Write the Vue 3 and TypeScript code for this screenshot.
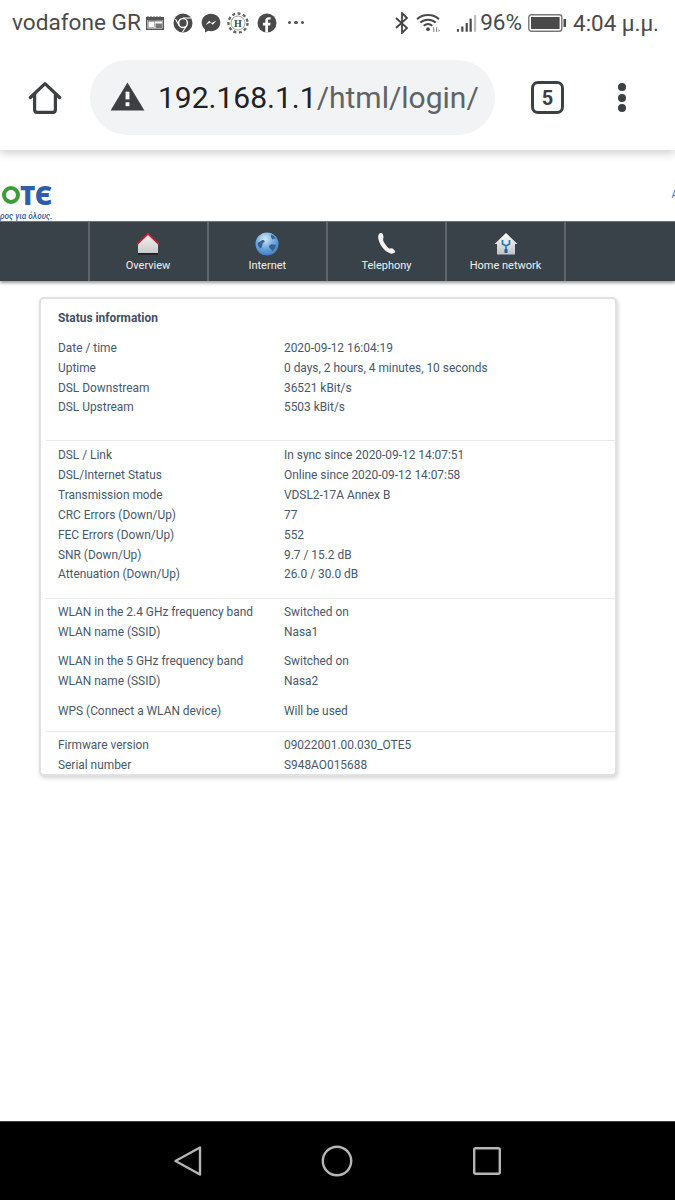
<script setup lang="ts">
interface Row { label: string; value: string }
interface Group { cls: string; rows: Row[] }

const groups: Group[] = [
  { cls: 'g1', rows: [
    { label: 'Date / time', value: '2020-09-12 16:04:19' },
    { label: 'Uptime', value: '0 days, 2 hours, 4 minutes, 10 seconds' },
    { label: 'DSL Downstream', value: '36521 kBit/s' },
    { label: 'DSL Upstream', value: '5503 kBit/s' },
  ] },
  { cls: 'g2', rows: [
    { label: 'DSL / Link', value: 'In sync since 2020-09-12 14:07:51' },
    { label: 'DSL/Internet Status', value: 'Online since 2020-09-12 14:07:58' },
    { label: 'Transmission mode', value: 'VDSL2-17A Annex B' },
    { label: 'CRC Errors (Down/Up)', value: '77' },
    { label: 'FEC Errors (Down/Up)', value: '552' },
    { label: 'SNR (Down/Up)', value: '9.7 / 15.2 dB' },
    { label: 'Attenuation (Down/Up)', value: '26.0 / 30.0 dB' },
  ] },
]
const wlan: Row[][] = [
  [
    { label: 'WLAN in the 2.4 GHz frequency band', value: 'Switched on' },
    { label: 'WLAN name (SSID)', value: 'Nasa1' },
  ],
  [
    { label: 'WLAN in the 5 GHz frequency band', value: 'Switched on' },
    { label: 'WLAN name (SSID)', value: 'Nasa2' },
  ],
  [{ label: 'WPS (Connect a WLAN device)', value: 'Will be used' }],
]
const fw: Row[] = [
  { label: 'Firmware version', value: '09022001.00.030_OTE5' },
  { label: 'Serial number', value: 'S948AO015688' },
]
</script>

<template>
  <div class="screen">
    <div class="status">
      <span class="carrier">vodafone GR</span>
      <svg class="ic" width="20" height="16" viewBox="0 0 20 16"><path d="M1 2h1.5V1h1v1h2V1h1v1h2V1h1v1h2V1h1v1h2V1h1v1H19v13H1z" fill="#555"/><rect x="2.5" y="5" width="15" height="8.5" fill="#fff"/><rect x="3.5" y="6" width="6" height="6.5" fill="#fff" stroke="#888" stroke-width=".6"/><rect x="10.500" y="8.500" width="6.500" height="4.500" fill="#777"/><path d="M3 5.800h14" stroke="#666" stroke-width="1.200"/></svg>
      <svg class="ic i-chrome" width="20" height="20" viewBox="0 0 20 20"><circle cx="10" cy="10" r="9.500" fill="#4a4a4a"/><circle cx="10" cy="10" r="4.400" fill="#4a4a4a" stroke="#fff" stroke-width="1.500"/><path d="M10 5h8M6 12.500 2.500 6M13.500 13 9.500 19" stroke="#fff" stroke-width="1.100"/></svg>
      <svg class="ic i-msg" width="20" height="20" viewBox="0 0 20 20"><path d="M10 .8c5.200 0 9.300 3.800 9.300 8.700s-4.100 8.700-9.300 8.700c-1 0-1.900-.1-2.700-.4L4 19.500v-3.200C1.900 14.700.7 12.300.7 9.500.7 4.600 4.800.8 10 .8z" fill="#4a4a4a"/><path d="m4.600 12.100 3.500-4.300 2.700 2.200 4.600-2.600-3.500 4.300-2.700-2.200z" fill="#fff"/></svg>
      <svg class="ic i-h" width="22" height="22" viewBox="0 0 22 22"><circle cx="11" cy="11" r="9.500" fill="#fff" stroke="#666" stroke-width="2.400" stroke-dasharray="3 2.500"/><circle cx="11" cy="11" r="7" fill="#fff" stroke="#888" stroke-width=".8"/><text x="11" y="14.600" text-anchor="middle" class="h-text">H</text></svg>
      <svg class="ic i-fb" width="20" height="20" viewBox="0 0 20 20"><circle cx="10" cy="10" r="9.500" fill="#4a4a4a"/><path d="M8.300 19.500v-7H6V9.800h2.300V7.700c0-2.300 1.400-3.500 3.400-3.500.9 0 1.700.1 1.900.1v2.300h-1.300c-1.100 0-1.300.5-1.300 1.300v1.900h2.600l-.4 2.700h-2.200v7z" fill="#fff"/></svg>
      <span class="dots">
        <i></i><i></i><i></i>
      </span>
      <span class="spacer"></span>
      <svg class="ic i-bt" width="16" height="22" viewBox="0 0 16 22"><path d="m2 6 11 10-5 5V1l5 5L2 16" fill="none" stroke="#444" stroke-width="1.800"/></svg>
      <svg class="ic i-wifi" width="25" height="21" viewBox="0 0 26 22"><path d="M1 7.500C7 1.800 18 1.800 24 7.500M4.500 11c4.500-4 11.500-4 16 0M8 14.500c2.800-2.300 6.200-2.300 9 0" fill="none" stroke="#4a4a4a" stroke-width="2.100"/><circle cx="12.500" cy="18" r="2" fill="#4a4a4a"/><path d="M18 16h1v5h-1zM21 21v-5h1v5zM23.500 18l1.500 1.500-1.500 1.500z" fill="#777"/></svg>
      <svg class="ic i-sig" width="21" height="22" viewBox="0 0 24 22"><g fill="#4a4a4a"><rect x="1" y="18" width="2.500" height="3"/><rect x="6" y="15" width="2.500" height="6"/><rect x="11" y="11" width="2.500" height="10"/><rect x="15.500" y="6" width="2.500" height="15"/></g><rect x="20.500" y="2" width="2.500" height="19" fill="#bbb"/></svg>
      <span class="pct">96%</span>
      <svg class="ic i-bat" width="39" height="18" viewBox="0 0 39 18"><rect x=".8" y=".8" width="33" height="16.400" rx="2.500" fill="#fff" stroke="#777" stroke-width="1.400"/><rect x="3" y="3" width="28.600" height="12" fill="#4a4a4a"/><rect x="35.500" y="5" width="2.500" height="8" fill="#4a4a4a"/></svg>
      <span class="time">4:04 μ.μ.</span>
    </div>

    <div class="toolbar">
      <svg class="home" width="34" height="34" viewBox="0 0 36 36"><path d="M2.500 17.500 18 2.800l15.500 14.700M7 14v16.500c0 1.800 1 2.800 2.800 2.800h16.400c1.800 0 2.800-1 2.800-2.800V14" fill="none" stroke="#3c4043" stroke-width="3.400" stroke-linejoin="round" stroke-linecap="round"/></svg>
      <div class="omni">
        <svg class="warn" width="35" height="29" viewBox="0 0 36 30"><path d="M18 .5 35.500 29.500H.500z" fill="#3c4043"/><rect x="16" y="10" width="4" height="8" fill="#fff"/><rect x="16" y="21" width="4" height="4" fill="#fff"/></svg>
        <span class="url"><span class="host">192.168.1.1</span>/html/login/</span>
      </div>
      <div class="tabs">5</div>
      <div class="menu"><i></i><i></i><i></i></div>
    </div>

    <div class="page">
      <div class="brand">
        <div class="logo">
          <div class="logo-mark"><span class="o"></span><span class="te">TЄ</span></div>
          <div class="tag">ρος για όλους.</div>
        </div>
        <span class="edge">A</span>
      </div>

      <nav class="nav">
        <div class="cell">
          <svg width="24" height="24" viewBox="0 0 24 24"><defs><linearGradient id="hs" x1="0" y1="0" x2="0" y2="1"><stop offset="0" stop-color="#f4f4f4"/><stop offset="1" stop-color="#c9c9c9"/></linearGradient></defs><path d="M12 2 22 12v9.500H2V12z" fill="url(#hs)"/><path d="M1 12.500 12 2l11 10.500" fill="none" stroke="#d8202c" stroke-width="1.700"/><rect x="2" y="21" width="20" height="1.600" fill="#1c1f22"/></svg>
          <span>Overview</span>
        </div>
        <div class="cell">
          <svg width="24" height="24" viewBox="0 0 24 24"><defs><radialGradient id="gl" cx=".42" cy=".28" r=".85"><stop offset="0" stop-color="#d6e8f8"/><stop offset=".5" stop-color="#6aa6de"/><stop offset="1" stop-color="#2f6fb5"/></radialGradient></defs><circle cx="12" cy="12" r="11.500" fill="url(#gl)"/><path d="M2.500 11c1.500-1.500 3-1 4-2.500 1-1 2.500-.5 3 .5s-.5 1.500-1.500 2-.3 2-1 3.500-1.200 2.500-2 1.500C3.500 15 2.500 13 2.500 11zM16 2.500c2 .7 3.800 2.200 4.800 4-1.200.6-2 0-3 1-1.300-.6-2.300-2.800-1.800-5zM14 14c1-1.200 2.500-2 4-1.500 1 .3 2 .2 3 .2-.4 2.800-2 5.200-3.800 6.500-.5-1.500-1.500-2-2.300-3-.5-.8-1.300-1.500-.9-2.200z" fill="#37618f"/></svg>
          <span>Internet</span>
        </div>
        <div class="cell">
          <svg width="24" height="24" viewBox="0 0 24 24"><path d="M5.500 1.500C7.200.7 8.300 1 8.800 2.200c.7 1.700.9 3.300.4 4.500-.3.800-.2 1.500.2 2.300 1.300 2.700 3 5 5 7 .6.600 1.300.7 2 .4 1.200-.4 2.300-.1 3.100.8l1.300 1.600c.6.800.5 1.500-.3 2-1.200.8-2.700 1.100-4 .6C11 20 5.800 13.500 4.300 6.800 3.900 4.800 4.200 2.400 5.500 1.500z" fill="#f2f2f2"/></svg>
          <span>Telephony</span>
        </div>
        <div class="cell">
          <svg width="24" height="24" viewBox="0 0 24 24"><defs><linearGradient id="hn" x1="0" y1="0" x2="0" y2="1"><stop offset="0" stop-color="#fff"/><stop offset="1" stop-color="#bfc2c4"/></linearGradient></defs><path d="M12 1 23.500 12H21v10.500H3V12H.5z" fill="url(#hn)"/><path d="M8.500 8v4l3.500 2 3.500-2V8M12 14v4" fill="none" stroke="#2478b8" stroke-width="1.700"/><rect x="10.500" y="17" width="3" height="4" fill="#1a5f98"/></svg>
          <span>Home network</span>
        </div>
      </nav>

      <section class="card">
        <h2 class="title">Status information</h2>
        <div v-for="g in groups" :key="g.cls" class="group" :class="g.cls">
          <div v-for="r in g.rows" :key="r.label" class="row">
            <span class="lab">{{ r.label }}</span><span class="val">{{ r.value }}</span>
          </div>
        </div>
        <div class="group g3">
          <div v-for="(set, i) in wlan" :key="i" class="wset">
            <div v-for="r in set" :key="r.label" class="row">
              <span class="lab">{{ r.label }}</span><span class="val">{{ r.value }}</span>
            </div>
          </div>
        </div>
        <div class="group g4">
          <div v-for="r in fw" :key="r.label" class="row">
            <span class="lab">{{ r.label }}</span><span class="val">{{ r.value }}</span>
          </div>
        </div>
      </section>
    </div>

    <div class="softkeys">
      <svg width="30" height="32" viewBox="0 0 30 32"><path d="M28 2.500v27L3.500 16z" fill="none" stroke="#b5b5b5" stroke-width="2.400" stroke-linejoin="round"/></svg>
      <svg width="32" height="32" viewBox="0 0 32 32"><circle cx="16" cy="16" r="14.200" fill="none" stroke="#b5b5b5" stroke-width="2.400"/></svg>
      <svg width="30" height="30" viewBox="0 0 30 30"><rect x="2.200" y="2.200" width="25.600" height="25.600" rx="1.500" fill="none" stroke="#b5b5b5" stroke-width="2.400"/></svg>
    </div>
  </div>
</template>

<style>
html, body { margin: 0; background: #fff; }
</style>

<style scoped>
.screen {
  width: 675px; height: 1200px; display: flex; flex-direction: column; overflow: hidden;
  background: #fff; font-family: Roboto, "Noto Sans", sans-serif;
}
.status {
  height: 45px; flex: none; display: flex; align-items: center; box-sizing: border-box;
  padding: 0 16px 0 12px; color: #4a4a4a;
}
.ic { flex: none; display: block; }
.carrier { font-size: 22.600px; margin-right: 4px; white-space: nowrap; }
.i-chrome { margin-left: 8px; }
.i-msg { margin-left: 8px; }
.i-h { margin-left: 6px; }
.i-fb { margin-left: 8px; }
.h-text { font: 700 10px "Liberation Serif", serif; fill: #444; }
.dots { display: flex; gap: 3px; margin-left: 11px; }
.dots i { width: 3.500px; height: 3.500px; border-radius: 50%; background: #555; }
.spacer { flex: 1; }
.i-wifi { margin-left: 6px; }
.i-sig { margin-left: 15px; }
.pct { font-size: 22.600px; margin-left: 3px; }
.i-bat { margin-left: 6px; }
.time { font-size: 22.400px; margin-left: 6px; white-space: nowrap; }

.toolbar {
  height: 105px; flex: none; display: flex; align-items: center; box-sizing: border-box;
  padding-left: 28px; position: relative; z-index: 2;
  box-shadow: 0 3px 9px rgba(0, 0, 0, .2);
  clip-path: inset(0 0 -20px 0);
  background: #fff;
}
.home { flex: none; }
.omni {
  margin-left: 28px; width: 405px; height: 75px; border-radius: 38px; background: #f1f3f4;
  display: flex; align-items: center; box-sizing: border-box; padding-left: 20px; flex: none;
}
.warn { flex: none; margin-top: -2px; }
.url { font-size: 30px; color: #5f6368; margin-left: 13px; white-space: nowrap; }
.host { color: #202124; }
.tabs {
  margin-left: 36px; width: 27px; height: 27px; border: 3.500px solid #3c4043; border-radius: 7px; flex: none;
  display: flex; align-items: center; justify-content: center; color: #3c4043; font-size: 20px; font-weight: 700;
}
.menu { margin-left: 54px; display: flex; flex-direction: column; gap: 2.500px; flex: none; }
.menu i { width: 8px; height: 8px; border-radius: 50%; background: #3c4043; }

.page { flex: 1; display: flex; flex-direction: column; min-height: 0; }
.brand {
  height: 71px; flex: none; box-sizing: border-box; display: flex; justify-content: space-between;
  overflow: hidden;
}
.logo { margin-top: 33px; }
.logo-mark { display: flex; align-items: center; height: 24px; }
.o {
  width: 18px; height: 18px; border: 4.500px solid #3d9b3a; border-radius: 50%; box-sizing: border-box;
  margin-left: 2px;
}
.te { color: #2d5fa8; font: 800 26px/24px "Open Sans", sans-serif; letter-spacing: -.5px; }
.tag { color: #2d5fa8; font-size: 8.200px; font-weight: 500; margin-top: 4px; line-height: 10px; font-style: italic; white-space: nowrap; }
.edge { color: #3c6fb8; font-size: 10px; margin-top: 39px; margin-right: -3px; }

.nav {
  height: 60px; flex: none; display: flex; box-sizing: border-box; padding-left: 87.500px;
  background: #394249; border-top: 1px solid #6d7378;
  box-shadow: 0 2px 3px rgba(0, 0, 0, .4);
}
.cell {
  width: 119.200px; flex: none; box-sizing: border-box; border-left: 2px solid #5e6468;
  display: flex; flex-direction: column; align-items: center; color: #f0f0f0; font-size: 11px;
  padding-top: 10px;
}
.cell svg { height: 24px; display: block; }
.cell span { margin-top: 2px; line-height: 16px; }
.cell:last-child { width: 121px; border-right: 2px solid #5e6468; }

.card {
  margin: 16px 0 0 38.500px; width: 578.500px; height: 479px; flex: none; box-sizing: border-box;
  border: 2px solid #dfe1e3; border-radius: 5px; background: #fff;
  box-shadow: 1px 2px 4px rgba(0, 0, 0, .18); overflow: hidden;
  color: #46586c; font-size: 11.900px;
}
.title { margin: 0; padding: 11px 0 0 17.500px; font-size: 11.900px; font-weight: 700; line-height: 16px; color: #3f4f63; }
.group { padding: 0 0 0 17.500px; margin-left: 5px; }
.row { display: flex; height: 19.850px; align-items: center; margin-left: -5px; }
.lab { width: 226px; flex: none; }
.val { flex: 1; }
.g1 { padding-top: 12px; padding-bottom: 23px; }
.g2 { border-top: 1px solid #e8eaec; padding-top: 4px; padding-bottom: 14px; }
.g3 { border-top: 1px solid #e8eaec; padding-top: 3px; padding-bottom: 10px; }
.wset + .wset { margin-top: 9.500px; }
.wset:last-child { margin-top: 10px; }
.g4 { border-top: 1px solid #e8eaec; padding-top: 3px; }
.g4 .row { height: 20px; }

.softkeys {
  height: 79px; flex: none; background: #000; display: flex; align-items: center;
  padding-left: 172px; gap: 119px; box-sizing: border-box; border-top: 1px solid #444;
}
.softkeys svg { display: block; flex: none; }
</style>
